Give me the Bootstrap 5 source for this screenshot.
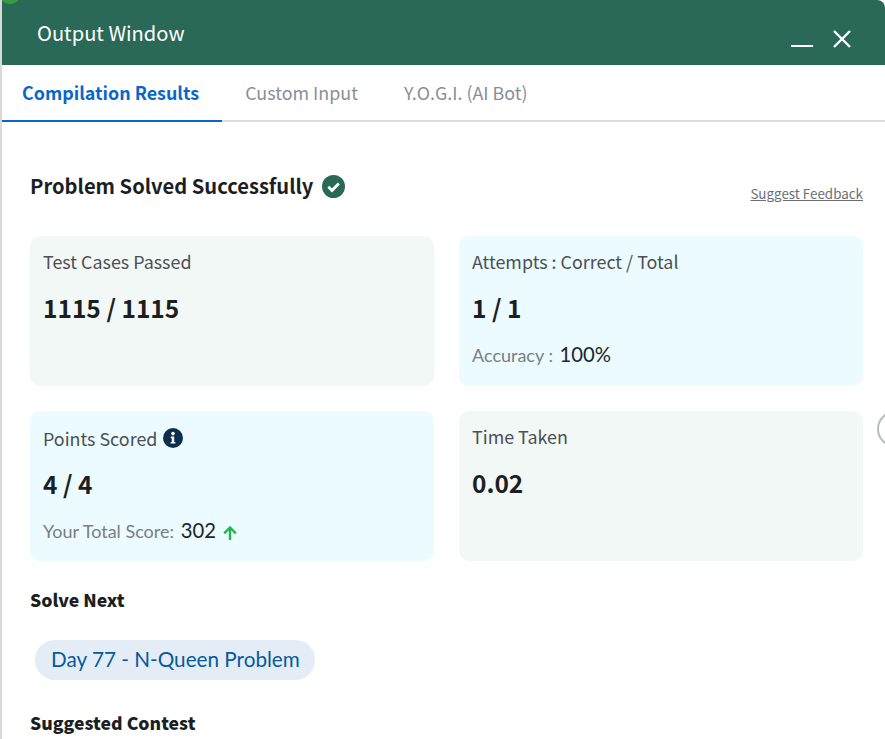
<!DOCTYPE html>
<html lang="en">
<head>
<meta charset="utf-8">
<title>Output Window</title>
<link href="https://cdn.jsdelivr.net/npm/bootstrap@5.3.0/dist/css/bootstrap.min.css" rel="stylesheet">
<style>
html,body{height:739px;overflow:hidden;background:#fff}
body{font-family:"Noto Sans CJK SC","Liberation Sans",sans-serif;color:#1b1f23}
.win{height:739px;border-left:2px solid #d9d9d9;overflow:hidden;position:relative}
.dot-corner{position:absolute;left:-2px;top:-13px;width:20px;height:17px;border-radius:50%;background:#3a9a44;z-index:2}
.win-head{height:65px;background:#2a6858;color:#fff;padding:0 33px 0 35px;border-top-right-radius:8px}
.win-title{font-size:20.1px;line-height:1;margin-top:23px;font-weight:400}
.win-ctrl{gap:19px;padding-top:29px}
.tab-row{height:57px;border-bottom:2px solid #dcdcdc}
.tab-item{font-size:17.9px;line-height:1;padding:19px 23px 0;color:#8a8d99;height:57px;text-decoration:none}
.tab-item.is-on{color:#0866c6;font-weight:700;border-bottom:2px solid #0866c6;padding-left:20px}
.tab-body{padding:0 22px 0 28px}
.solved-row{height:114px;padding-top:52px}
.solved-title{font-size:20.15px;font-weight:700;line-height:1.2;color:#1b1f23;margin:0}
.solved-line{gap:9px}
.fb-link{font-size:13.4px;color:#6c6f73;margin-top:11px;line-height:1.2}
.stat-grid{display:grid;grid-template-columns:404px 404px;column-gap:25px;row-gap:25px}
.stat-box{height:150px;border-radius:10px;padding:12px 13px}
.box-grey{background:#f2f8f6}
.box-blue{background:#ebfbff}
.stat-label{font-size:17.9px;line-height:26px;color:#4c4f53}
.label-drop{margin-top:2px;margin-bottom:-1px;gap:6px}
.stat-value{font-size:24.5px;font-weight:700;line-height:32px;margin-top:18px;color:#1b1f23}
.stat-sub{font-family:"Lato","Noto Sans",sans-serif;font-size:18px;line-height:24px;color:#7b7e82;margin-top:18px}
.stat-sub b{font-weight:400;font-size:20.3px;color:#23262a;margin-left:2px}
.up-arrow{margin-left:2px}
.sec-title{font-size:17.6px;font-weight:900;line-height:24px;color:#1b1f23}
.sec-next{margin-top:27px}
.sec-contest{margin-top:31px}
.next-pill{display:inline-block;background:#e4edf5;color:#075a9e;font-family:"Lato","Noto Sans",sans-serif;font-size:20.7px;line-height:38px;height:40px;border-radius:20px;padding:0 15px 0 16px;margin:28px 0 0 5px;text-decoration:none}
.edge-circle{position:absolute;left:875px;top:411px;width:36px;height:36px;border-radius:50%;border:2px solid #b5bdc5;background:#fff}
</style>
</head>
<body>
<div class="win">
  <div class="dot-corner"></div>
  <div class="win-head d-flex justify-content-between">
    <div class="win-title">Output Window</div>
    <div class="win-ctrl d-flex align-items-start">
      <svg width="22" height="20" viewBox="0 0 22 20"><rect x="0" y="16" width="22" height="2" fill="#fff"/></svg>
      <svg width="20" height="20" viewBox="0 0 20 20"><path d="M2 2 18 18M18 2 2 18" stroke="#fff" stroke-width="2.4" fill="none"/></svg>
    </div>
  </div>
  <div class="tab-row d-flex">
    <a class="tab-item is-on" href="#">Compilation Results</a>
    <a class="tab-item" href="#">Custom Input</a>
    <a class="tab-item" href="#">Y.O.G.I. (AI Bot)</a>
  </div>
  <div class="tab-body">
    <div class="solved-row d-flex justify-content-between align-items-start">
      <div class="solved-line d-flex align-items-center">
        <h1 class="solved-title">Problem Solved Successfully</h1>
        <svg width="23" height="23" viewBox="0 0 23 23"><circle cx="11.5" cy="11.5" r="11.5" fill="#2a6858"/><path d="M6.3 11.8 10 15.4 16.8 8.4" stroke="#fff" stroke-width="2.8" fill="none"/></svg>
      </div>
      <a class="fb-link" href="#">Suggest Feedback</a>
    </div>
    <div class="stat-grid">
      <div class="stat-box box-grey">
        <div class="stat-label">Test Cases Passed</div>
        <div class="stat-value">1115 / 1115</div>
      </div>
      <div class="stat-box box-blue">
        <div class="stat-label">Attempts : Correct / Total</div>
        <div class="stat-value">1 / 1</div>
        <div class="stat-sub">Accuracy : <b>100%</b></div>
      </div>
      <div class="stat-box box-blue">
        <div class="stat-label label-drop d-flex align-items-center">Points Scored
          <svg width="20" height="20" viewBox="0 0 20 20"><circle cx="10" cy="10" r="10" fill="#0e2f4c"/><circle cx="10" cy="5.6" r="1.8" fill="#fff"/><path d="M7.8 8.6h3.4v5.4h1.2v1.6H7.6V14h1.2v-3.8h-1z" fill="#fff"/></svg>
        </div>
        <div class="stat-value">4 / 4</div>
        <div class="stat-sub">Your Total Score: <b>302</b>
          <svg class="up-arrow" width="14" height="14" viewBox="0 0 14 14"><path d="M7 14V1.5M1.2 7.3 7 1.5l5.8 5.8" stroke="#1fb84a" stroke-width="2.4" fill="none"/></svg>
        </div>
      </div>
      <div class="stat-box box-grey">
        <div class="stat-label">Time Taken</div>
        <div class="stat-value">0.02</div>
      </div>
    </div>
    <div class="sec-title sec-next">Solve Next</div>
    <a class="next-pill" href="#">Day 77 - N-Queen Problem</a>
    <div class="sec-title sec-contest">Suggested Contest</div>
  </div>
  <div class="edge-circle"></div>
</div>
<script src="https://cdn.jsdelivr.net/npm/bootstrap@5.3.0/dist/js/bootstrap.bundle.min.js"></script>
</body>
</html>
